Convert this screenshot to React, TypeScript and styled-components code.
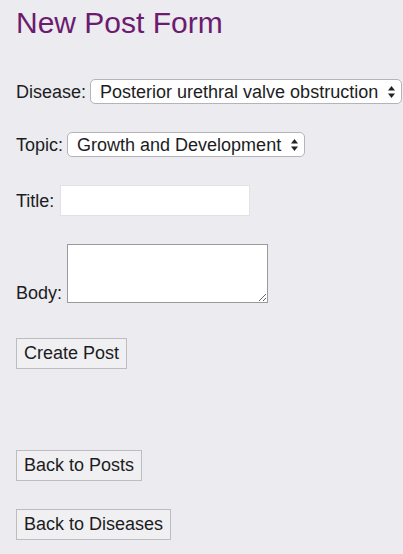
import React, { useState } from 'react';
import styled, { createGlobalStyle } from 'styled-components';

const GlobalStyle = createGlobalStyle`
  html, body {
    margin: 0;
    padding: 0;
    background: #ebebf0;
  }
  body {
    font-family: "Liberation Sans", Arial, sans-serif;
    color: #1c1c1e;
  }
`;

const diseases = ['Posterior urethral valve obstruction', 'Hydronephrosis', 'Vesicoureteral reflux'];
const topics = ['Growth and Development', 'Nutrition', 'Treatment'];

const App: React.FC = () => {
  const [disease, setDisease] = useState(diseases[0]);
  const [topic, setTopic] = useState(topics[0]);
  const [title, setTitle] = useState('');
  const [body, setBody] = useState('');

  return (
    <Page>
      <GlobalStyle />
      <Heading>New Post Form</Heading>
      <Form onSubmit={(e) => e.preventDefault()}>
        <Row>
          <Label htmlFor="disease">Disease:</Label>
          <SelectWrap>
            <Select id="disease" value={disease} onChange={(e) => setDisease(e.target.value)}>
              {diseases.map((d) => (
                <option key={d}>{d}</option>
              ))}
            </Select>
            <Arrows />
          </SelectWrap>
        </Row>
        <Row>
          <Label htmlFor="topic">Topic:</Label>
          <SelectWrap>
            <Select id="topic" value={topic} onChange={(e) => setTopic(e.target.value)}>
              {topics.map((t) => (
                <option key={t}>{t}</option>
              ))}
            </Select>
            <Arrows />
          </SelectWrap>
        </Row>
        <Row $gap={6}>
          <Label htmlFor="title">Title:</Label>
          <TextInput id="title" type="text" value={title} onChange={(e) => setTitle(e.target.value)} />
        </Row>
        <Row $align="flex-end" $gap={5}>
          <Label htmlFor="body">Body:</Label>
          <TextArea id="body" value={body} onChange={(e) => setBody(e.target.value)} />
        </Row>
        <Button type="submit" $top={7}>Create Post</Button>
        <Button type="button" $top={53}>Back to Posts</Button>
        <Button type="button">Back to Diseases</Button>
      </Form>
    </Page>
  );
};

const Arrows: React.FC = () => (
  <ArrowIcon width="9" height="14" viewBox="0 0 9 14">
    <path d="M4.5 1 L8 5.6 L1 5.6 Z" fill="#222" />
    <path d="M4.5 13 L8 8.4 L1 8.4 Z" fill="#222" />
  </ArrowIcon>
);

const Page = styled.div`
  padding: 8px 16px 15px;
`;

const Heading = styled.h1`
  margin: 0 0 41px;
  font-size: 30px;
  line-height: 30px;
  font-weight: normal;
  color: #6d1b6f;
`;

const Form = styled.form`
  display: flex;
  flex-direction: column;
  align-items: flex-start;
  gap: 28px;
`;

const Row = styled.div<{ $align?: string; $gap?: number }>`
  display: flex;
  align-items: ${(p) => p.$align || 'center'};
  gap: ${(p) => p.$gap ?? 4}px;
`;

const Label = styled.label`
  font-size: 18px;
  line-height: 20px;
`;

const SelectWrap = styled.div`
  position: relative;
  display: flex;
`;

const Select = styled.select`
  appearance: none;
  -webkit-appearance: none;
  margin: 0;
  height: 25px;
  padding: 0 22px 0 9px;
  font-family: "Liberation Sans", Arial, sans-serif;
  font-size: 18px;
  color: #1c1c1e;
  background: #fff;
  border: 1px solid #b4b4b8;
  border-radius: 5px;
  outline: none;
`;

const ArrowIcon = styled.svg`
  position: absolute;
  right: 6px;
  top: 50%;
  transform: translateY(-50%);
  pointer-events: none;
`;

const TextInput = styled.input`
  margin: 0;
  width: 190px;
  height: 31px;
  box-sizing: border-box;
  padding: 2px 4px;
  font-size: 18px;
  background: #fff;
  border: 1px solid #e2e2e6;
  outline: none;
`;

const TextArea = styled.textarea`
  margin: 0;
  width: 201px;
  height: 59px;
  box-sizing: border-box;
  background: #fff;
  border: 1px solid #9a9a9e;
  outline: none;
`;

const Button = styled.button<{ $top?: number }>`
  margin: ${(p) => p.$top || 0}px 0 0;
  height: 31px;
  padding: 0 7px;
  font-family: "Liberation Sans", Arial, sans-serif;
  font-size: 18px;
  color: #1c1c1e;
  background: #f0f0f2;
  border: 1px solid #bdbdc1;
  border-radius: 0;
  cursor: pointer;
`;

export default App;
